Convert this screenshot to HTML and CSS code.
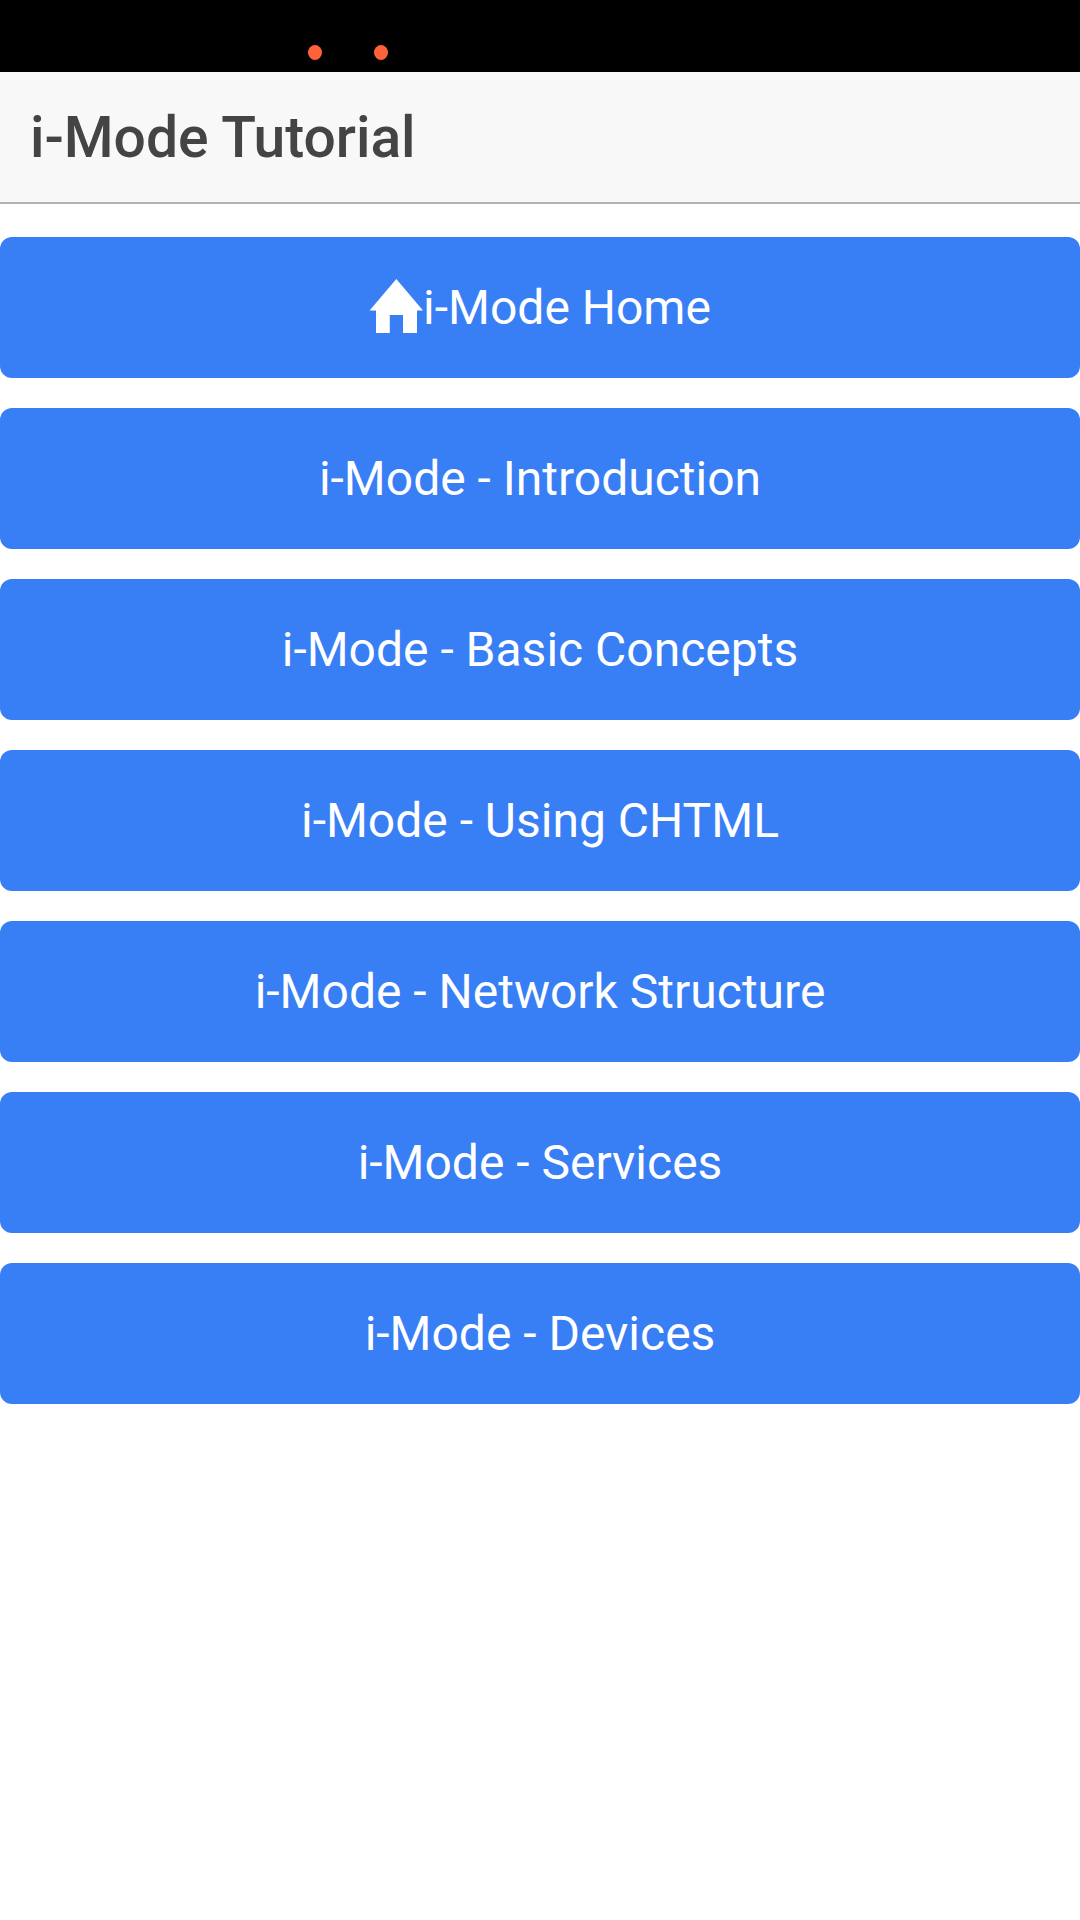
FILE: index.html
```html
<!DOCTYPE html>
<html lang="en">
<head>
<meta charset="utf-8">
<title>i-Mode Tutorial</title>
<link rel="stylesheet" href="styles.css">
</head>
<body>
<div class="status"><span class="dot"></span><span class="dot"></span></div>
<header class="bar"><h1 class="title">i-Mode Tutorial</h1></header>
<main class="list">
<button class="button"><svg class="home" viewBox="0 0 54 54"><path d="M27.3 0 54 31.5H48V54H34V36H20.8V54H7V31.5H.6Z"/></svg><span>i-Mode Home</span></button>
<button class="button">i-Mode - Introduction</button>
<button class="button">i-Mode - Basic Concepts</button>
<button class="button">i-Mode - Using CHTML</button>
<button class="button">i-Mode - Network Structure</button>
<button class="button">i-Mode - Services</button>
<button class="button">i-Mode - Devices</button>
</main>
</body>
</html>
```
FILE: styles.css
```css
* { box-sizing: border-box; }
body { margin: 0; min-height: 1920px; background: #fff; font-family: Roboto, sans-serif; }
.status { height: 72px; background: #000; display: flex; gap: 52px; padding: 45px 0 0 308px; }
.dot { width: 14px; height: 15px; border-radius: 50%; background: #ff6138; }
.bar { height: 132px; background: #f8f8f8; border-bottom: 2px solid #b2b2b2; padding: 2px 30px 0; display: flex; align-items: center; }
.title { margin: 0; font-size: 57px; font-weight: 500; color: #444; line-height: 128px; letter-spacing: -0.05px; }
.list { display: flex; flex-direction: column; gap: 30px; padding-top: 33px; }
.button { height: 141px; border: 0; border-radius: 12px; background: #387ef5; color: #fff; font-family: inherit; font-size: 48px; font-weight: 400; display: flex; align-items: center; justify-content: center; padding: 0; }
.home { width: 54px; height: 54px; margin-bottom: 4px; fill: #fff; }
```
